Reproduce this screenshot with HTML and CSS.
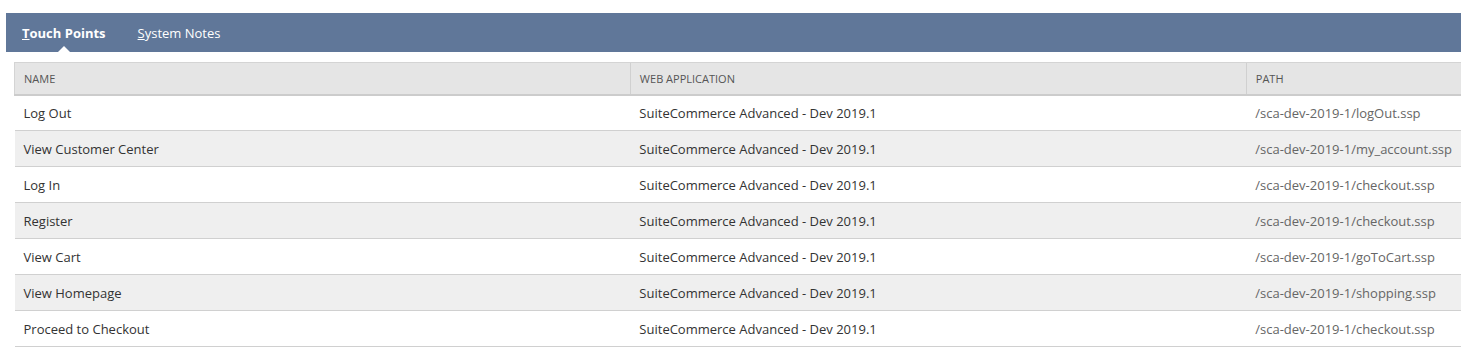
FILE: index.html
```html
<!DOCTYPE html>
<html lang="en">
<head>
    <meta charset="UTF-8">
    <title>Touch Points</title>
    <link rel="stylesheet" href="styles.css">
</head>
<body>

    <div class="subtabs">
        <div class="tab active"><u>T</u>ouch Points</div>
        <div class="tab"><u>S</u>ystem Notes</div>
    </div>

    <div class="list-wrap">
        <table class="list">
            <thead>
                <tr>
                    <th class="col-name">Name</th>
                    <th class="col-app">Web Application</th>
                    <th>Path</th>
                </tr>
            </thead>
            <tbody>
                <tr>
                    <td>Log Out</td>
                    <td>SuiteCommerce Advanced - Dev 2019.1</td>
                    <td class="path">/sca-dev-2019-1/logOut.ssp</td>
                </tr>
                <tr>
                    <td>View Customer Center</td>
                    <td>SuiteCommerce Advanced - Dev 2019.1</td>
                    <td class="path">/sca-dev-2019-1/my_account.ssp</td>
                </tr>
                <tr>
                    <td>Log In</td>
                    <td>SuiteCommerce Advanced - Dev 2019.1</td>
                    <td class="path">/sca-dev-2019-1/checkout.ssp</td>
                </tr>
                <tr>
                    <td>Register</td>
                    <td>SuiteCommerce Advanced - Dev 2019.1</td>
                    <td class="path">/sca-dev-2019-1/checkout.ssp</td>
                </tr>
                <tr>
                    <td>View Cart</td>
                    <td>SuiteCommerce Advanced - Dev 2019.1</td>
                    <td class="path">/sca-dev-2019-1/goToCart.ssp</td>
                </tr>
                <tr>
                    <td>View Homepage</td>
                    <td>SuiteCommerce Advanced - Dev 2019.1</td>
                    <td class="path">/sca-dev-2019-1/shopping.ssp</td>
                </tr>
                <tr>
                    <td>Proceed to Checkout</td>
                    <td>SuiteCommerce Advanced - Dev 2019.1</td>
                    <td class="path">/sca-dev-2019-1/checkout.ssp</td>
                </tr>
            </tbody>
        </table>
    </div>

</body>
</html>
```

FILE: styles.css
```css
/* Basic reset */
* {
    margin: 0;
    padding: 0;
    box-sizing: border-box;
}

body {
    padding: 13px 0 0 6px;
    font-family: 'Open Sans', sans-serif;
    font-size: 13px;
    color: #333;
    background: #fff;
    overflow: hidden;
}

/* Subtab bar */
.subtabs {
    display: flex;
    align-items: center;
    height: 39px;
    padding-left: 16px;
    gap: 32px;
    background-color: #607799;
}

.tab {
    position: relative;
    color: #fff;
    font-size: 13px;
    line-height: 39px;
    padding-top: 1px;
}

.tab.active {
    font-weight: bold;
}

/* little white arrow under the selected tab */
.tab.active::after {
    content: '';
    position: absolute;
    left: 50%;
    bottom: 0;
    margin-left: -7px;
    border-left: 7px solid transparent;
    border-right: 7px solid transparent;
    border-bottom: 7px solid #fff;
}

/* List table */
.list-wrap {
    padding: 10px 0 0 8px;
}

.list {
    width: 100%;
    border-collapse: collapse;
}

.list th {
    height: 32px;
    padding: 0 9px;
    text-align: left;
    font-size: 11px;
    font-weight: normal;
    text-transform: uppercase;
    color: #555;
    background-color: #e5e5e5;
    border-top: 1px solid #d4d4d4;
    border-bottom: 2px solid #ccc;
    border-left: 1px solid #d0d0d0;
}

.list th:first-child {
    border-left: 1px solid #d4d4d4;
}

.list th.col-name,
.list th.col-app {
    width: 616px;
}

.list td {
    height: 36px;
    padding: 0 9px;
    border-bottom: 1px solid #d0d0d0;
    color: #333;
    white-space: nowrap;
}

.list tbody tr:nth-child(even) td {
    background-color: #efefef;
}

.list td.path {
    color: #666;
}
```
